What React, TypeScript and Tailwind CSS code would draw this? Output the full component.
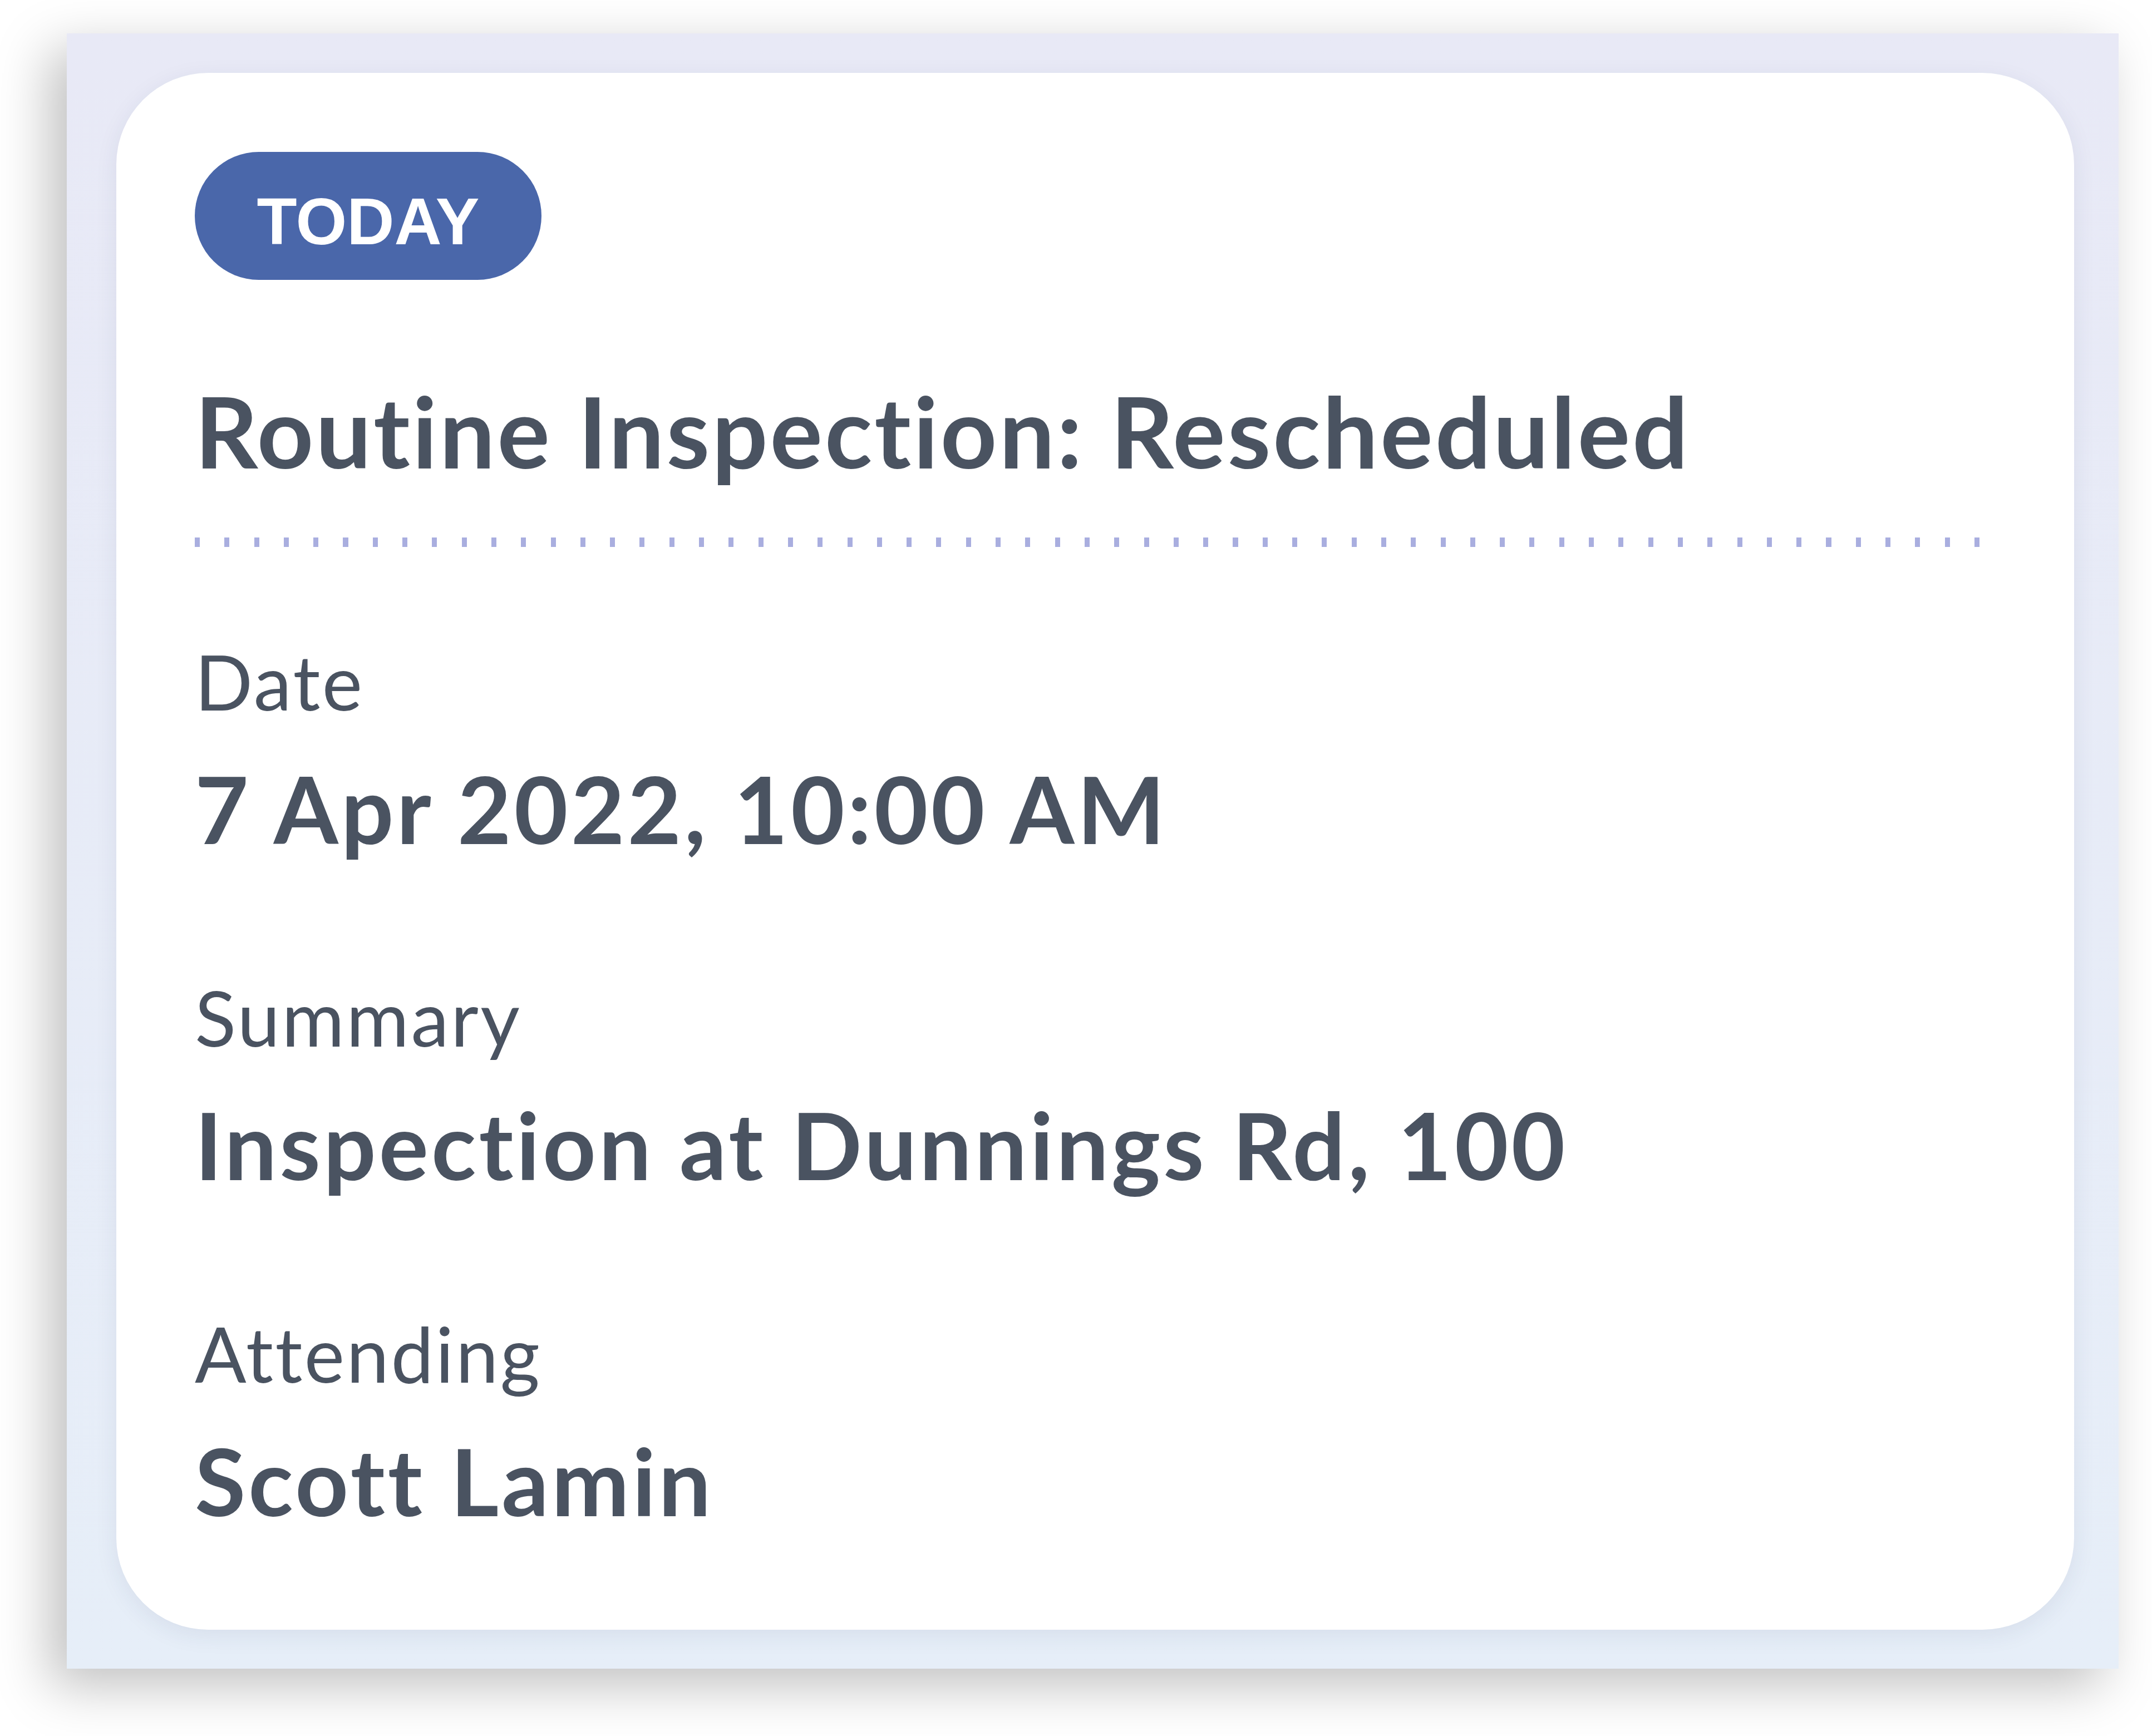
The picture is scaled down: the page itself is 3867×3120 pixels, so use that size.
const fields = [
  { label: 'Date', value: '7 Apr 2022, 10:00 AM' },
  { label: 'Summary', value: 'Inspection at Dunnings Rd, 100' },
  { label: 'Attending', value: 'Scott Lamin' },
];

function Field({ label, value }: { label: string; value: string }) {
  return (
    <div className="flex flex-col gap-[76px]">
      <div className="text-[137px] leading-none font-normal tracking-[0.025em]">{label}</div>
      <div className="text-[167px] leading-none font-bold tracking-[0.03em]">{value}</div>
    </div>
  );
}

export default function App() {
  return (
    <div className="w-[3867px] h-[3120px] bg-white pl-[120px] pt-[60px] overflow-hidden">
      <div className="w-[3687px] h-[2939px] flex bg-linear-to-b from-[#e8e9f6] to-[#e6eef8] pl-[89px] pr-[80px] pt-[71px] pb-[70px] shadow-[-30px_30px_90px_rgba(0,0,0,0.25)]">
        <div className="flex-1 flex flex-col items-start rounded-[165px] bg-white px-[141px] pt-[142px] shadow-[0_10px_40px_rgba(40,50,90,0.08)] font-['Lato',sans-serif] text-[#4a5361]">
          <div className="h-[230px] w-[623px] rounded-full bg-[#4a67aa] flex items-center justify-center pt-[20px]">
            <span className="font-['Liberation_Sans',Arial,sans-serif] text-[118px] leading-none font-bold text-white">
              TODAY
            </span>
          </div>

          <h1 className="mt-[182px] text-[177px] leading-none font-bold tracking-[0.022em]">
            Routine Inspection: Rescheduled
          </h1>

          <div className="mt-[104px] h-[17px] w-full bg-[repeating-linear-gradient(to_right,#a9aedf_0_9px,transparent_9px_53.3px)]" />

          <div className="mt-[173px] flex flex-col gap-[224px]">
            {fields.map((f) => (
              <Field key={f.label} label={f.label} value={f.value} />
            ))}
          </div>
        </div>
      </div>
    </div>
  );
}
